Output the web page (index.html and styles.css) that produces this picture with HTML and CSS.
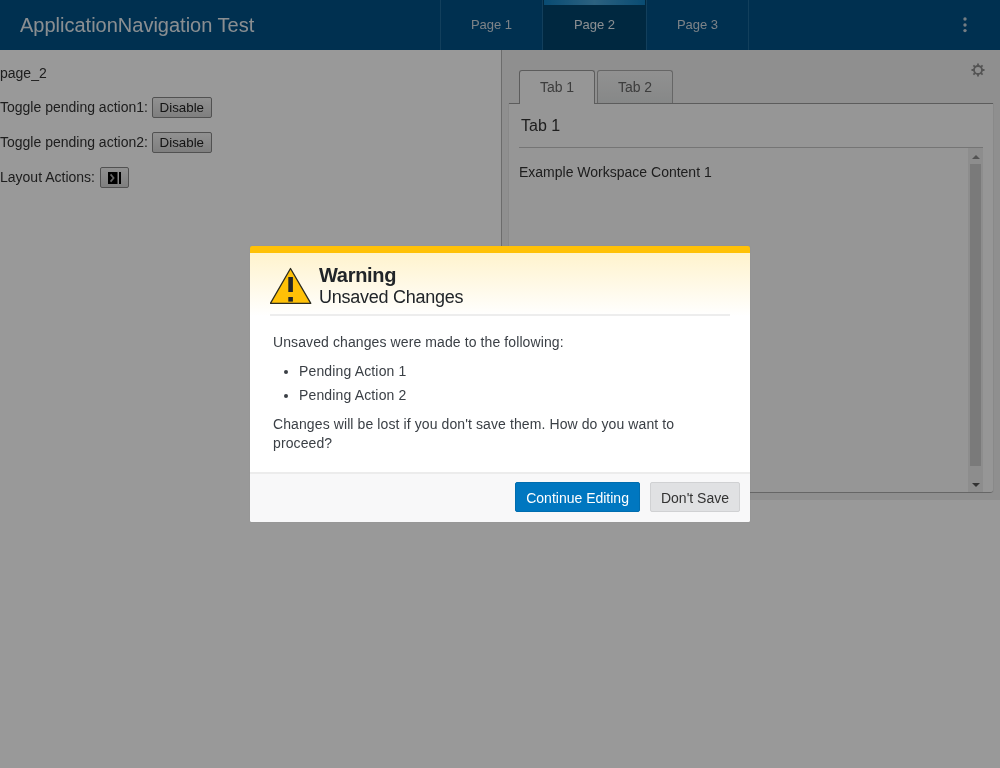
FILE: index.html
```html
<!DOCTYPE html>
<html>
<head>
  <title>ApplicationNavigation Test</title>
  <link rel="stylesheet" href="styles.css">
</head>
<body>
  <header class="nav-bar">
    <div class="app-title">ApplicationNavigation Test</div>
    <nav class="nav-tabs">
      <a class="nav-tab">Page 1</a>
      <a class="nav-tab nav-tab-active">Page 2</a>
      <a class="nav-tab">Page 3</a>
    </nav>
    <div class="nav-overflow">
      <svg width="4" height="16" viewBox="0 0 4 16"><circle cx="2" cy="2" r="1.7"/><circle cx="2" cy="8" r="1.7"/><circle cx="2" cy="13.6" r="1.7"/></svg>
    </div>
  </header>

  <main class="content">
    <section class="left-pane">
      <p class="line line-first">page_2</p>
      <p class="line">Toggle pending action1: <button class="small-btn">Disable</button></p>
      <p class="line">Toggle pending action2: <button class="small-btn">Disable</button></p>
      <p class="line">Layout Actions: <button class="small-btn icon-btn">
        <svg width="13" height="12" viewBox="0 0 13 12"><rect x="0" y="0" width="9.5" height="12" fill="#000"/><path d="M2.6 2.4l3 3.6-3 3.6" fill="none" stroke="#aaa" stroke-width="1.7"/><rect x="11" y="0" width="2" height="12" fill="#000"/></svg>
      </button></p>
    </section>

    <section class="right-pane">
      <svg class="gear" width="14" height="14" viewBox="0 0 14 14">
        <circle cx="7" cy="7" r="4" fill="none" stroke="#8c8c8c" stroke-width="1.8"/>
        <path d="M7 0.5v2.5M7 11v2.5M0.5 7h2.5M11 7h2.5M2.4 2.4l1.8 1.8M9.8 9.8l1.8 1.8M2.4 11.6l1.8-1.8M9.8 4.2l1.8-1.8" stroke="#8c8c8c" stroke-width="1.8"/>
      </svg>
      <div class="tab-strip">
        <div class="tab tab-selected">Tab 1</div>
        <div class="tab">Tab 2</div>
      </div>
      <div class="tab-panel">
        <h2 class="panel-title">Tab 1</h2>
        <div class="panel-body">
          <div class="panel-text">Example Workspace Content 1</div>
          <div class="scrollbar">
            <div class="arrow-up"></div>
            <div class="thumb"></div>
            <div class="arrow-down"></div>
          </div>
        </div>
      </div>
    </section>
  </main>

  <div class="overlay"></div>

  <div class="dialog">
    <div class="dialog-head">
      <div class="dialog-head-inner">
        <svg class="warn-icon" width="43" height="38" viewBox="0 0 43 38">
          <path d="M20.5 1.5L40.8 36.3H0.4z" fill="#ffc107" stroke="#2b2b20" stroke-width="1.3" stroke-linejoin="round"/>
          <rect x="18.3" y="10" width="4.6" height="15" fill="#212529"/>
          <rect x="18.3" y="30" width="4.6" height="4.6" fill="#212529"/>
        </svg>
        <div class="dialog-titles">
          <div class="dialog-title">Warning</div>
          <div class="dialog-subtitle">Unsaved Changes</div>
        </div>
      </div>
    </div>
    <div class="dialog-body">
      <p>Unsaved changes were made to the following:</p>
      <ul>
        <li>Pending Action 1</li>
        <li>Pending Action 2</li>
      </ul>
      <p>Changes will be lost if you don't save them. How do you want to proceed?</p>
    </div>
    <div class="dialog-foot">
      <button class="btn btn-primary">Continue Editing</button>
      <button class="btn btn-default">Don't Save</button>
    </div>
  </div>
</body>
</html>
```

FILE: styles.css
```css
html, body {
  margin: 0;
  height: 100%;
}

body {
  font-family: "Liberation Sans", Arial, sans-serif;
  font-size: 14px;
  color: #333;
  background: #fff;
  overflow: hidden;
}

/* plain grey text edges */
.nav-bar, .content, .dialog {
  will-change: transform;
}

/* top bar */
.nav-bar {
  height: 50px;
  display: flex;
  background: #005085;
  color: #e6edf2;
}

.app-title {
  width: 440px;
  padding-left: 20px;
  box-sizing: border-box;
  font-size: 20px;
  line-height: 50px;
}

.nav-tabs {
  display: flex;
  border-left: 1px solid #1f6a9a;
}

.nav-tab {
  width: 101px;
  text-align: center;
  font-size: 13px;
  line-height: 50px;
  border-right: 1px solid #1f6a9a;
  color: #d0dae2;
}

.nav-tab-active {
  width: 103px;
  color: #e6edf2;
  background:
    linear-gradient(to right, #0f7fc0, #4aa3d6, #0f7fc0) 1px 0 / 101px 5px no-repeat,
    #00436c;
}

.nav-overflow {
  flex: 1;
  display: flex;
  justify-content: flex-end;
  align-items: center;
  padding-right: 33px;
}

.nav-overflow svg {
  fill: #c4d0da;
}

/* page content */
.content {
  display: flex;
  height: 450px;
}

.left-pane {
  width: 501px;
  border-right: 1px solid #b5b5b5;
}

.line {
  margin: 0;
  height: 35px;
  line-height: 21px;
  white-space: nowrap;
}

.line-first {
  padding-top: 13px;
  height: 21px;
  margin-bottom: 13px;
}

.small-btn {
  font-family: "Liberation Sans", Arial, sans-serif;
  font-size: 13.33px;
  color: #222;
  height: 21px;
  width: 60px;
  padding: 0;
  margin-bottom: 2px;
  border: 1px solid #888;
  border-radius: 2px;
  background: linear-gradient(to bottom, #f2f2f2, #d4d4d4);
  vertical-align: middle;
}

.icon-btn {
  width: 29px;
  margin-left: 1px;
  display: inline-flex;
  align-items: center;
  justify-content: center;
}

.right-pane {
  position: relative;
  flex: 1;
  background: #eeeeee;
  padding: 20px 7px 7px;
  display: flex;
  flex-direction: column;
}

.gear {
  position: absolute;
  top: 13px;
  right: 15px;
}

.tab-strip {
  display: flex;
  gap: 2px;
  padding-left: 10px;
  height: 33px;
}

.tab {
  width: 74px;
  height: 32px;
  line-height: 33px;
  text-align: center;
  color: #666;
  border: 1px solid #aaa;
  border-bottom: none;
  border-radius: 3px 3px 0 0;
  background: linear-gradient(to bottom, #f2f2f2, #e0e2e2);
}

.tab-selected {
  height: 33px;
  background: #fbfbfb;
  border-color: #999;
  position: relative;
}

.tab-panel {
  flex: 1;
  display: flex;
  flex-direction: column;
  background: #fbfbfb;
  border-top: 1px solid #999;
  border-bottom: 1px solid #aaa;
  border-radius: 0 0 3px 3px;
  padding: 0 10px;
  box-shadow: 1px 0 0 #e4e4e4, -1px 0 0 #e4e4e4;
}

.panel-title {
  margin: 0;
  height: 43px;
  line-height: 43px;
  padding-left: 2px;
  font-size: 16px;
  font-weight: normal;
  color: #333;
  border-bottom: 1px solid #c4c4c4;
}

.panel-body {
  flex: 1;
  display: flex;
  justify-content: space-between;
}

.panel-text {
  padding-top: 15px;
  line-height: 18px;
}

.scrollbar {
  width: 15px;
  background: #ececec;
  display: flex;
  flex-direction: column;
  align-items: center;
}

.arrow-up, .arrow-down {
  width: 0;
  height: 0;
  border-left: 4px solid transparent;
  border-right: 4px solid transparent;
}

.arrow-up {
  margin: 7px 0 5px;
  border-bottom: 4px solid #8a8a8a;
}

.arrow-down {
  margin: 17px 0 5px;
  border-top: 4px solid #555;
}

.thumb {
  flex: 1;
  width: 11px;
  background: #cbcbcb;
}

.overlay {
  position: fixed;
  inset: 0;
  background: rgba(0, 0, 0, 0.4);
}

/* dialog */
.dialog {
  position: fixed;
  left: 250px;
  top: 246px;
  width: 500px;
  height: 276px;
  display: flex;
  flex-direction: column;
  background: #fff;
  border-top: 7px solid #ffc107;
  box-sizing: border-box;
  border-radius: 2px;
  box-shadow: 0 0 1px rgba(0, 0, 0, 0.1);
}

.dialog-head {
  padding: 0 20px;
  height: 63px;
  background: linear-gradient(to bottom, #fff3cd, #fff);
  box-sizing: border-box;
}

.dialog-head-inner {
  display: flex;
  height: 61px;
  border-bottom: 2px solid #ededed;
}

.warn-icon {
  margin-top: 14px;
  flex: none;
}

.dialog-titles {
  margin-left: 6px;
  padding-top: 10px;
  color: #212529;
}

.dialog-title {
  font-size: 20px;
  font-weight: bold;
  line-height: 24px;
  letter-spacing: -0.3px;
}

.dialog-subtitle {
  font-size: 18px;
  line-height: 21px;
  letter-spacing: -0.25px;
}

.dialog-body {
  flex: 1;
  padding: 17px 23px 0;
  color: #3a3f45;
  line-height: 19.6px;
  letter-spacing: 0.1px;
}

.dialog-body p {
  margin: 0 0 6px;
}

.dialog-body ul {
  margin: 0 0 8px;
  padding-left: 26px;
}

.dialog-body li {
  line-height: 24px;
  letter-spacing: 0.15px;
}

.dialog-foot {
  height: 50px;
  display: flex;
  justify-content: flex-end;
  align-items: center;
  gap: 10px;
  padding: 0 10px 2px 0;
  background: #f8f8f9;
  border-top: 2px solid #ececec;
  border-radius: 0 0 2px 2px;
  box-sizing: border-box;
}

.btn {
  font-family: "Liberation Sans", Arial, sans-serif;
  font-size: 14px;
  height: 30px;
  padding: 2px 10px 0;
  border-radius: 2px;
}

.btn-primary {
  color: #fff;
  background: #0077c0;
  border: 1px solid #006daf;
}

.btn-default {
  color: #333;
  background: #e0e1e3;
  border: 1px solid #d0d1d3;
}
```
